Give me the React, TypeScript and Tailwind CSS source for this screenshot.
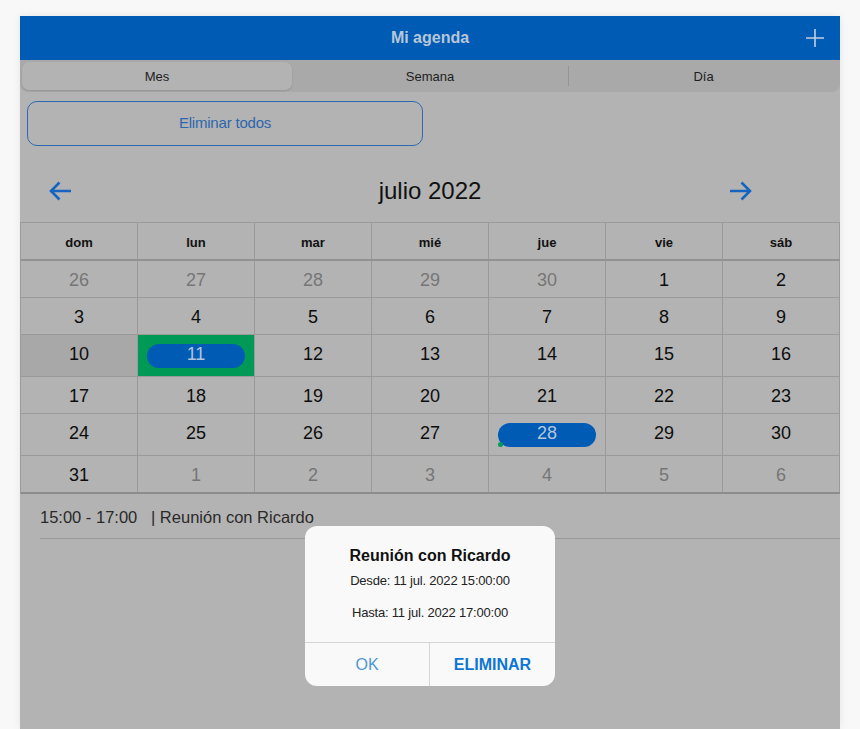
import React from "react";

type Cell = { d: number; other?: boolean; today?: boolean; selected?: boolean; event?: boolean; dot?: boolean };

const rows: Cell[][] = [
  [{ d: 26, other: true }, { d: 27, other: true }, { d: 28, other: true }, { d: 29, other: true }, { d: 30, other: true }, { d: 1 }, { d: 2 }],
  [{ d: 3 }, { d: 4 }, { d: 5 }, { d: 6 }, { d: 7 }, { d: 8 }, { d: 9 }],
  [{ d: 10, today: true }, { d: 11, selected: true, event: true }, { d: 12 }, { d: 13 }, { d: 14 }, { d: 15 }, { d: 16 }],
  [{ d: 17 }, { d: 18 }, { d: 19 }, { d: 20 }, { d: 21 }, { d: 22 }, { d: 23 }],
  [{ d: 24 }, { d: 25 }, { d: 26 }, { d: 27 }, { d: 28, event: true, dot: true }, { d: 29 }, { d: 30 }],
  [{ d: 31 }, { d: 1, other: true }, { d: 2, other: true }, { d: 3, other: true }, { d: 4, other: true }, { d: 5, other: true }, { d: 6, other: true }],
];

const days = ["dom", "lun", "mar", "mié", "jue", "vie", "sáb"];

function Arrow({ dir }: { dir: "left" | "right" }) {
  return (
    <svg width="24" height="20" viewBox="0 0 24 20" fill="none" stroke="#1565c0" strokeWidth="2.6" strokeLinecap="butt" strokeLinejoin="miter">
      {dir === "left" ? (
        <path d="M23 10H3 M11.5 1.5L3 10l8.5 8.5" />
      ) : (
        <path d="M1 10h20 M12.5 1.5L21 10l-8.5 8.5" />
      )}
    </svg>
  );
}

export default function App() {
  return (
    <div
      className="min-h-screen bg-[#f8f8f8] pt-[16px]"
      style={{ fontFamily: '"Liberation Sans", Arial, sans-serif' }}
    >
      <div className="relative ml-[20px] w-[820px] h-[713px] bg-[#b3b3b3] shadow-[0_0_8px_rgba(0,0,0,0.08)] flex flex-col">
        {/* Header */}
        <div className="relative h-[44px] bg-[#005bb5] flex items-center justify-center">
          <span className="text-[16px] font-bold text-[#b9c6d8]">Mi agenda</span>
          <svg className="absolute right-[16px] top-[13px]" width="18" height="18" viewBox="0 0 18 18" stroke="#c2cfe0" strokeWidth="1.6">
            <path d="M9 0v18M0 9h18" />
          </svg>
        </div>

        {/* Segmented */}
        <div className="h-[32px] bg-[#a9a9a9] rounded-b-[8px] flex items-stretch p-[2px] text-[13px] text-[#1e1e1e]">
          <div className="w-[270px] rounded-[7px] bg-[#b3b3b3] shadow-[0_1px_2px_rgba(0,0,0,0.12)] flex items-center justify-center pt-[1px]">Mes</div>
          <div className="w-[276px] flex items-center justify-center pt-[1px]">Semana</div>
          <div className="w-px my-[4px] bg-[#959595]" />
          <div className="flex-1 flex items-center justify-center pt-[1px]">Día</div>
        </div>

        {/* Eliminar todos */}
        <div className="pt-[9px] pl-[7px]">
          <div className="w-[396px] h-[45px] rounded-[10px] border border-[#2e69b0] flex items-center justify-center text-[15px] text-[#2d66ad] tracking-[-0.2px]">
            Eliminar todos
          </div>
        </div>

        {/* Nav */}
        <div className="h-[76px] pt-[14px] grid grid-cols-[1fr_auto_1fr] items-center">
          <div className="pl-[28px] flex">
            <Arrow dir="left" />
          </div>
          <div className="text-[24px] text-[#111]">julio 2022</div>
          <div className="pr-[87px] flex justify-end">
            <Arrow dir="right" />
          </div>
        </div>

        {/* Grid */}
        <div className="border-l border-t border-[#9a9a9a]">
          <div className="grid grid-cols-7 border-b-2 border-[#929292]">
            {days.map((d) => (
              <div key={d} className="h-[36px] pt-[3px] border-r border-[#9a9a9a] flex items-center justify-center text-[13px] font-bold text-[#111]">
                {d}
              </div>
            ))}
          </div>
          {rows.map((row, ri) => (
            <div key={ri} className={`grid grid-cols-7 ${ri === rows.length - 1 ? "border-b-2 border-[#8c8c8c]" : ""}`}>
              {row.map((c, ci) => (
                <div
                  key={ci}
                  className={`pt-[9px] pb-[8px] border-r border-[#9a9a9a] ${ri === rows.length - 1 ? "" : "border-b"} ${
                    c.selected ? "bg-[#009955]" : c.today ? "bg-[#a8a8a8]" : ""
                  }`}
                >
                  {c.event ? (
                    <div className="relative mx-[9px] h-[24px] pt-[1px] rounded-full bg-[#005bb5] text-center text-[18px] leading-[19px] text-[#b4c6dc]">
                      {c.d}
                      {c.dot && <span className="absolute left-[0px] bottom-[0px] w-[5px] h-[5px] rounded-full bg-[#009955]" />}
                    </div>
                  ) : (
                    <div className={`h-[19px] pt-[1px] text-center text-[18px] leading-[19px] ${c.other ? "text-[#767676]" : "text-[#0d0d0d]"}`}>
                      {c.d}
                    </div>
                  )}
                </div>
              ))}
            </div>
          ))}
        </div>

        {/* Event list */}
        <div className="pl-[20px]">
          <div className="h-[45px] pt-[2px] border-b border-[#999] flex items-center text-[16.5px] text-[#2a2a2a] whitespace-pre">
            15:00 - 17:00   | Reunión con Ricardo
          </div>
        </div>

        {/* Dialog */}
        <div className="absolute left-[285px] top-[510px] w-[250px] h-[160px] rounded-[12px] bg-[#f9f9f9] flex flex-col">
          <div className="flex-1 flex flex-col items-center">
            <div className="mt-[20px] text-[16px] font-bold text-[#111] leading-[20px]">Reunión con Ricardo</div>
            <div className="mt-[7px] text-[13px] text-[#222] leading-[16px] tracking-[-0.2px]">Desde: 11 jul. 2022 15:00:00</div>
            <div className="mt-[16px] text-[13px] text-[#222] leading-[16px] tracking-[-0.2px]">Hasta: 11 jul. 2022 17:00:00</div>
          </div>
          <div className="h-[44px] border-t border-[#d6d6d6] flex">
            <div className="w-[124px] flex items-center justify-center text-[16px] text-[#4a98d6]">OK</div>
            <div className="w-px bg-[#d6d6d6]" />
            <div className="flex-1 flex items-center justify-center text-[16px] font-bold text-[#0c76d6]">ELIMINAR</div>
          </div>
        </div>
      </div>
    </div>
  );
}
